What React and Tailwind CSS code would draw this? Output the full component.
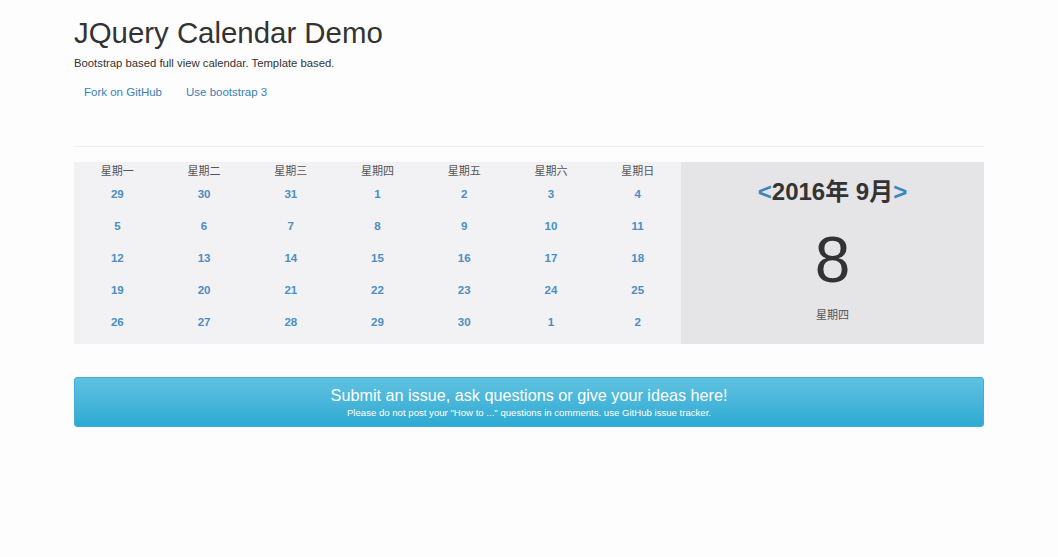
import React from 'react';

const weekDays = ['星期一', '星期二', '星期三', '星期四', '星期五', '星期六', '星期日'];

// Weeks of September 2016, starting Monday
const weeks = [
  [29, 30, 31, 1, 2, 3, 4],
  [5, 6, 7, 8, 9, 10, 11],
  [12, 13, 14, 15, 16, 17, 18],
  [19, 20, 21, 22, 23, 24, 25],
  [26, 27, 28, 29, 30, 1, 2],
];

const font = { fontFamily: '"Liberation Sans", "Noto Sans CJK SC", Arial, sans-serif' };

const App = () => {
  return (
    <div className="min-h-[557px] bg-[#fdfdfd] text-[#333]" style={font}>
      <div className="mx-[74px] pt-[15px]">
        <h1 className="text-[29.4px] leading-[36px] font-medium text-[#333]">JQuery Calendar Demo</h1>
        <p className="mt-[4px] text-[11.3px] leading-[16px] text-[#333]">
          Bootstrap based full view calendar. Template based.
        </p>

        {/* Links */}
        <ul className="mt-[13px] flex text-[11.5px] leading-[16px] text-[#3a7fb4]">
          <li className="pl-[10px] pr-[12px]">
            <a href="#">Fork on GitHub</a>
          </li>
          <li className="px-[12px]">
            <a href="#">Use bootstrap 3</a>
          </li>
        </ul>

        <hr className="mt-[46px] border-t border-[#f0f0f0]" />

        {/* Calendar */}
        <div className="mt-[15px] flex h-[182px]">
          <div className="w-[607px] bg-[#f2f1f4] pt-[1px]">
            <div className="grid grid-cols-7 h-[16px] items-center text-[11px] text-[#555]">
              {weekDays.map(d => (
                <div key={d} className="text-center">{d}</div>
              ))}
            </div>
            {weeks.map((week, i) => (
              <div key={i} className="grid grid-cols-7 h-[32px] items-center text-[11.5px] font-semibold text-[#4a8fc4]">
                {week.map((day, j) => (
                  <div key={j} className="text-center">{day}</div>
                ))}
              </div>
            ))}
          </div>
          <div className="flex-1 bg-[#e5e4e7] flex flex-col items-center">
            <div className="mt-[15px] text-[24px] leading-[30px] font-bold text-[#333]">
              <span className="text-[#3a87c0]">&lt;</span>2016年 9月<span className="text-[#3a87c0]">&gt;</span>
            </div>
            <div className="mt-[20px] text-[64px] leading-[66px] font-light text-[#333]">8</div>
            <div className="mt-[14px] text-[11px] text-[#555]">星期四</div>
          </div>
        </div>

        {/* Issue banner */}
        <a
          href="#"
          className="mt-[33px] flex h-[50px] flex-col items-center justify-center rounded-[3px] border border-[#3fb0d4] bg-gradient-to-b from-[#5fc2e0] to-[#2caad3] text-white"
        >
          <span className="text-[16.2px] leading-[21px] font-light">Submit an issue, ask questions or give your ideas here!</span>
          <span className="mt-[1px] text-[9.6px] leading-[12px]">
            Please do not post your "How to ..." questions in comments. use GitHub issue tracker.
          </span>
        </a>
      </div>
    </div>
  );
};

export default App;
